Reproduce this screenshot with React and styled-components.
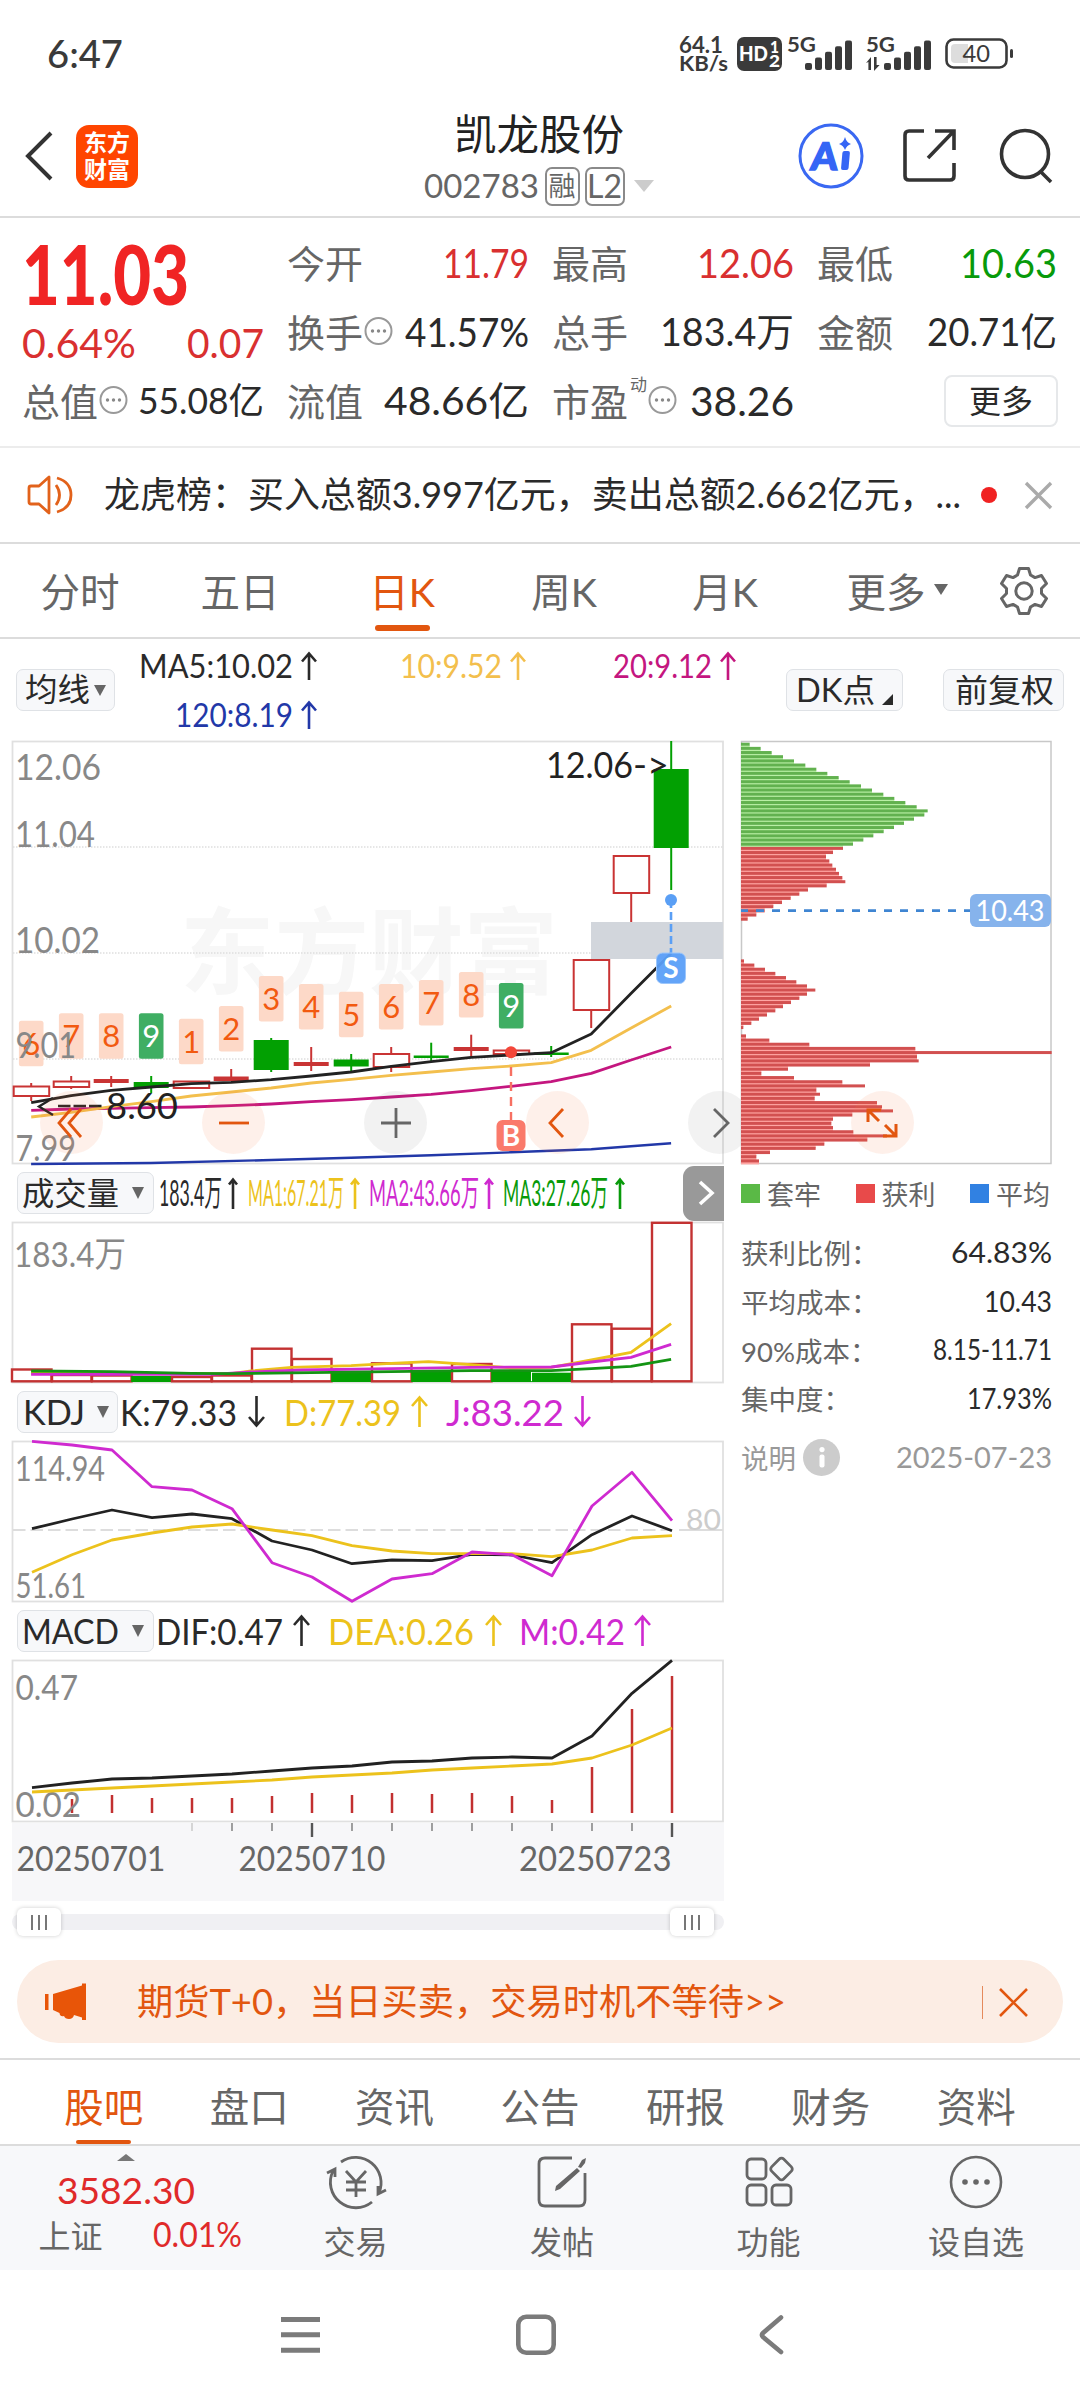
import React, { useLayoutEffect, useRef, useState } from "react";
import styled, { createGlobalStyle } from "styled-components";

const FONT = `Lato, "Noto Sans CJK SC", "Liberation Sans", sans-serif`;

const GlobalStyle = createGlobalStyle`
  * { box-sizing: border-box; }
  body { margin: 0; background: #fff; }
  svg { display: block; flex: none; overflow: visible; }
  svg text { font-family: ${FONT}; }
`;

const C = {
  red: "#d93030",
  green: "#089a0a",
  dark: "#2a2a2a",
  grey: "#666",
  orange: "#e2560f",
  line: "#dcdcdc",
  yellow: "#ecc21c",
  amber: "#f3bf4d",
  violet: "#cf2ad0",
  magenta: "#c4167f",
  navy: "#2238a8",
};

/* ---------- text that keeps a fixed width ---------- */

const FitBox = styled.span`
  display: inline-block;
  flex: none;
  width: ${(p) => p.$w}px;
  margin-left: ${(p) => p.$ml || 0}px;
  font-size: ${(p) => p.$size || 38}px;
  font-weight: ${(p) => p.$weight || 400};
  line-height: 1.2;
  color: ${(p) => p.$color || "inherit"};
  white-space: nowrap;
`;
const FitInner = styled.span`
  display: inline-block;
  margin-left: -1px;
  transform-origin: 0 50%;
`;

function Fit({ w, size, weight, color, ml, children }) {
  const ref = useRef(null);
  const [scale, setScale] = useState(1);
  useLayoutEffect(() => {
    const natural = ref.current.getBoundingClientRect().width / scale;
    if (natural) setScale((w + 2) / natural);
  }, [w, children]);
  return (
    <FitBox $w={w} $size={size} $weight={weight} $color={color} $ml={ml}>
      <FitInner ref={ref} style={{ transform: `scaleX(${scale})` }}>
        {children}
      </FitInner>
    </FitBox>
  );
}

const T = ({ x, r, y, size = 37, fill = "#888", children, ...rest }) => (
  <text x={x - 1} y={y} fontSize={size} fill={fill} textLength={r - x + 2} lengthAdjust="spacingAndGlyphs" {...rest}>
    {children}
  </text>
);

/* ---------- page ---------- */

const Page = styled.div`
  width: 1080px;
  height: 2400px;
  display: flex;
  flex-direction: column;
  overflow: hidden;
  background: #fff;
  font-family: ${FONT};
  color: ${C.dark};
`;

const StatusBar = styled.div`
  height: 108px;
  padding: 0 67px 0 48px;
  display: flex;
  align-items: center;
`;
const StatusIcons = styled.div`
  margin-left: auto;
  display: flex;
  align-items: center;
`;
const Speed = styled.div`
  display: flex;
  flex-direction: column;
  gap: 0;
  width: 50px;
  margin-right: 7px;
  color: #3a3a3a;
  & > span { line-height: 19px; }
`;

const Header = styled.header`
  height: 110px;
  padding: 0 27px 0 25px;
  display: grid;
  grid-template-columns: 1fr 230px 1fr;
  grid-template-rows: 108px;
  align-items: center;
  border-bottom: 2px solid ${C.line};
`;
const HeaderSide = styled.div`
  display: flex;
  align-items: center;
  justify-content: ${(p) => (p.$end ? "flex-end" : "flex-start")};
  gap: ${(p) => p.$gap}px;
  padding-bottom: 12px;
`;
const Logo = styled.div`
  width: 62px;
  height: 63px;
  border-radius: 13px;
  background: #ff4500;
  color: #fff;
  font-size: 23px;
  font-weight: 700;
  line-height: 27px;
  display: grid;
  place-content: center;
  text-align: center;
`;
const TitleBlock = styled.div`
  display: flex;
  flex-direction: column;
  align-items: center;
  padding-bottom: 3px;
`;
const Title = styled.div`
  font-size: 42.5px;
  line-height: 51px;
  color: #222;
`;
const SubTitle = styled.div`
  display: flex;
  align-items: center;
  height: 54px;
  color: ${C.grey};
`;
const Tag = styled.span`
  height: 39px;
  width: ${(p) => p.$w}px;
  margin-left: ${(p) => p.$ml}px;
  border: 2px solid #8a8a8a;
  border-radius: 7px;
  display: grid;
  place-content: center;
  font-size: ${(p) => p.$size}px;
  line-height: 34px;
`;
const Tri = styled.i`
  flex: none;
  width: 0;
  height: 0;
  margin-left: ${(p) => p.$ml || 0}px;
  border: ${(p) => p.$s}px solid transparent;
  border-bottom-width: 0;
  border-top: ${(p) => p.$h}px solid ${(p) => p.$color || C.grey};
`;

/* ---------- quote ---------- */

const Quote = styled.section`
  height: 230px;
  padding: 10px 24px 0 23px;
  display: grid;
  grid-template-columns: 240px 240px 240px 238px;
  grid-template-rows: 69px 69px 69px;
  column-gap: 25px;
  border-bottom: 2px solid #ececec;
`;
const PriceCell = styled.div`
  grid-row: span 2;
  display: flex;
  flex-direction: column;
`;
const PriceRow = styled.div`
  height: ${(p) => p.$h}px;
  display: flex;
  align-items: center;
  justify-content: space-between;
`;
const Cell = styled.div`
  display: flex;
  align-items: center;
  justify-content: space-between;
`;
const CellLabel = styled.span`
  display: flex;
  align-items: center;
  font-size: 38px;
  line-height: 44px;
  margin-left: -1px;
  color: ${C.grey};
`;
const Sup = styled.sup`
  align-self: flex-start;
  font-size: 17px;
  line-height: 17px;
  margin: -3px 0 0 2px;
`;
const MoreButton = styled.button`
  width: 114px;
  height: 52px;
  margin: 0 -2px 0 auto;
  padding: 0;
  background: #fff;
  border: 2px solid #e6e8ea;
  border-radius: 8px;
  font: 32px/44px ${FONT};
  color: ${C.dark};
`;

/* ---------- notice ---------- */

const Notice = styled.div`
  height: 96px;
  display: flex;
  align-items: center;
  padding: 0 28px 0 27px;
  border-bottom: 2px solid ${C.line};
`;
const Dot = styled.i`
  flex: none;
  width: 16px;
  height: 16px;
  margin: 0 28px 0 21px;
  border-radius: 50%;
  background: #f02222;
`;

/* ---------- tabs ---------- */

const PeriodTabs = styled.nav`
  height: 95px;
  display: grid;
  grid-template-columns: 160px 160px 164px 160px 162px 182px 71px;
  border-bottom: 2px solid ${C.line};
`;
const Tab = styled.div`
  position: relative;
  display: flex;
  align-items: center;
  justify-content: center;
  padding-bottom: ${(p) => p.$pb || 0}px;
  font-size: ${(p) => p.$size || 39.5}px;
  color: ${(p) => (p.$on ? C.orange : C.grey)};
  ${(p) => p.$on && `
    &::after {
      content: "";
      position: absolute;
      bottom: ${p.$bottom}px;
      width: 55px;
      height: ${p.$bar}px;
      border-radius: 3px;
      background: #e2560f;
    }
  `}
`;

const MaBar = styled.div`
  height: 102px;
  padding: 0 16px;
  display: flex;
  align-items: center;
`;
const Chip = styled.button`
  flex: none;
  width: ${(p) => p.$w}px;
  height: 42px;
  padding: 0 ${(p) => p.$pr || 0}px 0 0;
  margin-left: ${(p) => p.$ml || 0}px;
  display: flex;
  align-items: center;
  justify-content: center;
  background: #f7f8fa;
  border: 1.5px solid #dfe2e6;
  border-radius: 7px;
  font-family: ${FONT};
  color: ${C.dark};
`;
const MaGrid = styled.div`
  width: 646px;
  margin-left: 25px;
  height: 98px;
  display: flex;
  flex-wrap: wrap;
`;
const MaItem = styled.div`
  width: ${(p) => p.$w}px;
  height: 49px;
  padding-left: ${(p) => p.$pl || 0}px;
  padding-top: 1px;
  display: flex;
  align-items: center;
  color: ${(p) => p.$color};
`;
const Corner = styled.i`
  align-self: flex-end;
  margin: 0 0 5px 8px;
  border-left: 11px solid transparent;
  border-bottom: 11px solid ${C.dark};
`;

/* ---------- charts ---------- */

const ChartArea = styled.section`
  height: 1199px;
  display: grid;
  grid-template-columns: 712px 310px;
  column-gap: 17px;
  padding-left: 12px;
`;
const ChartColumn = styled.div`
  position: relative;
  display: flex;
  flex-direction: column;
`;
const SideColumn = styled.div`
  position: relative;
  display: flex;
  flex-direction: column;
`;
const IndicatorBar = styled.div`
  height: ${(p) => p.$h}px;
  display: flex;
  align-items: center;
  padding-left: 5px;
`;
const Reading = styled.div`
  display: flex;
  align-items: center;
  margin-left: ${(p) => p.$ml}px;
  color: ${(p) => p.$color};
`;
const NextButton = styled.button`
  width: 41px;
  height: 55px;
  margin-left: auto;
  padding: 0 0 0 7px;
  display: flex;
  align-items: center;
  justify-content: center;
  border: 0;
  border-radius: 11px 0 0 11px;
  background: #999;
`;
const FloatButton = styled.button`
  position: absolute;
  left: ${(p) => p.$x}px;
  top: 350px;
  width: 63px;
  height: 63px;
  padding: 0;
  display: grid;
  place-content: center;
  border: 0;
  border-radius: 50%;
  background: ${(p) => (p.$dim ? "rgba(90,90,90,.08)" : "rgba(250,120,60,.11)")};
`;
const Axis = styled.div`
  height: 78px;
  margin-top: 1px;
  background: #f7f7f9;
`;
const Slider = styled.div`
  height: 16px;
  margin-top: 13px;
  padding: 0 10px 0 5px;
  display: flex;
  align-items: center;
  justify-content: space-between;
  border-radius: 8px;
  background: #f0f0f3;
`;
const Handle = styled.i`
  width: 44px;
  height: 28px;
  display: flex;
  align-items: center;
  justify-content: center;
  gap: 5px;
  border-radius: 6px;
  background: #fff;
  box-shadow: 0 0 4px rgba(0, 0, 0, 0.2);
  & > b { width: 2px; height: 15px; background: #777; }
`;
const Legend = styled.div`
  height: 59px;
  display: flex;
  align-items: center;
  justify-content: space-between;
  padding-right: 1px;
`;
const LegendItem = styled.span`
  display: flex;
  align-items: center;
  gap: 7px;
  font-size: 27px;
  color: ${C.grey};
  &::before {
    content: "";
    width: 19px;
    height: 19px;
    background: ${(p) => p.$color};
  }
`;
const StatList = styled.div`
  padding-top: 5px;
`;
const Stat = styled.div`
  height: 48.7px;
  display: flex;
  align-items: center;
  justify-content: space-between;
  font-size: 27.5px;
  color: ${C.grey};
`;
const StatNote = styled(Stat)`
  margin-top: 10px;
  color: #999;
`;
const NoteLabel = styled.span`
  display: flex;
  align-items: center;
  gap: 7px;
`;
const Info = styled.i`
  width: 37px;
  height: 37px;
  border-radius: 50%;
  background: #ccc;
  display: grid;
  place-content: center;
`;

/* ---------- bottom ---------- */

const Banner = styled.div`
  width: 1046px;
  height: 83px;
  flex: none;
  margin: 20px 0 0 17px;
  padding: 1px 35px 0 28px;
  display: flex;
  align-items: center;
  border-radius: 42px;
  background: #fcede4;
  color: ${C.orange};
`;
const Divider = styled.i`
  width: 1.5px;
  height: 33px;
  margin: 0 16px 0 auto;
  background: #e58a5c;
`;
const InfoTabs = styled.nav`
  height: 88px;
  flex: none;
  margin-top: 15px;
  padding: 4px 31px 0;
  display: grid;
  grid-template-columns: repeat(7, 1fr);
  border-top: 2px solid ${C.line};
  border-bottom: 2px solid ${C.line};
`;
const Dock = styled.div`
  height: 124px;
  flex: none;
  display: grid;
  grid-template-columns: 252px 207px 206px 207px 208px;
  background: #f7f8fa;
`;
const IndexBox = styled.div`
  display: flex;
  flex-direction: column;
  align-items: center;
  padding-top: 8px;
`;
const UpTri = styled.i`
  border: 9.5px solid transparent;
  border-top: 0;
  border-bottom: 7px solid #777;
`;
const IndexRow = styled.div`
  height: 42px;
  width: 202px;
  margin-left: 27px;
  display: flex;
  align-items: center;
  justify-content: space-between;
  font-size: 32px;
  color: ${C.grey};
`;
const IndexValue = styled.div`
  margin-top: 7px;
  height: 45px;
  display: flex;
  align-items: center;
`;
const DockItem = styled.div`
  display: flex;
  flex-direction: column;
  align-items: center;
  padding-top: 8px;
  font-size: 32px;
  line-height: 40px;
  color: ${C.grey};
  & > svg { margin-bottom: 13px; }
`;
const SystemNav = styled.div`
  flex: 1;
  display: flex;
  align-items: flex-start;
  padding: 43px 0 0 281px;
`;
const Gap = styled.i`
  flex: none;
  width: ${(p) => p.$w}px;
`;

/* ---------- icons ---------- */

const ArrowSvg = styled.svg`
  margin-left: ${(p) => p.$ml}px;
`;
const Arrow = ({ down, w = 16, h = 28, ml = 9 }) => (
  <ArrowSvg $ml={ml} width={w} height={h} viewBox={`0 0 ${w} ${h}`} fill="none" stroke="currentColor" strokeWidth="2.6">
    <g transform={down ? `rotate(180 ${w / 2} ${h / 2})` : undefined}>
      <path d={`M${w / 2} ${h}V1.5M1 ${w * 0.5 + 1.5}L${w / 2} 1.5L${w - 1} ${w * 0.5 + 1.5}`} />
    </g>
  </ArrowSvg>
);

const More = () => (
  <svg width="29" height="29" viewBox="0 0 29 29" fill="none" stroke="#999" strokeWidth="2">
    <circle cx="15.5" cy="14" r="13" />
    <g fill="#888" stroke="none">
      <circle cx="9.5" cy="14" r="1.7" />
      <circle cx="15.5" cy="14" r="1.7" />
      <circle cx="21.5" cy="14" r="1.7" />
    </g>
  </svg>
);

const Signal = ({ data }) => (
  <svg width="66" height="36" viewBox="0 0 66 36" fill="#3a3a3a">
    <T x={1} r={28} y={16} size={21} fill="#3a3a3a" fontWeight="700">5G</T>
    {[0, 1, 2, 3, 4].map((i) => (
      <rect key={i} x={18 + i * 10} y={27 - i * 5.6} width="7" height={7 + i * 5.6} rx="2" />
    ))}
    {data && <path d="M0 27l5-6v13h-2.600v-8zM8 21h2.600v8h3l-5.600 6z" />}
  </svg>
);

const Cross = ({ s, color, w = 2.6 }) => (
  <svg width={s} height={s} viewBox={`0 0 ${s} ${s}`} stroke={color} strokeWidth={w}>
    <path d={`M1 1L${s - 1} ${s - 1}M${s - 1} 1L1 ${s - 1}`} />
  </svg>
);

const Gear = () => (
  <svg width="50" height="50" viewBox="0 0 50 50" fill="none" stroke="#666" strokeWidth="3" strokeLinejoin="round">
    <path d="M20.500 2.500h9l2 6.500 4.500 2.600 6.500-2.100 5 8-5 5v5l5 5-5 8-6.500-2.100-4.500 2.600-2 6.500h-9l-2-6.500-4.500-2.600-6.500 2.100-5-8 5-5v-5l-5-5 5-8 6.500 2.100 4.500-2.600z" />
    <circle cx="25" cy="25" r="8.200" />
  </svg>
);

/* ---------- chart data ---------- */

const col = (i) => 31.2 + 40 * i;
const poly = (ys, base, dx = 0) => ys.map((y, i) => `${col(i) + dx},${(base + y / 3).toFixed(1)}`).join(" ");
const free = (pts, base) => pts.map(([x, y]) => `${(x / 2.119).toFixed(1)},${(base + y / 3).toFixed(1)}`).join(" ");

// kind, body top, body bottom, wick top, wick bottom
const candles = [
  ["h", 1086.5, 1096, 1083, 1101],
  ["h", 1081.5, 1087, 1076, 1089],
  ["r", 1079, 1083, 1076, 1087],
  ["g", 1082, 1088, 1076, 1093],
  ["h", 1081.5, 1088, 1081, 1088],
  ["r", 1076.5, 1081, 1069, 1081],
  ["g", 1040, 1070, 1038, 1072],
  ["r", 1062, 1066, 1047, 1071],
  ["g", 1059.5, 1066.5, 1054, 1071],
  ["h", 1054, 1067, 1047, 1072],
  ["g", 1055.5, 1058, 1042.7, 1061],
  ["r", 1047, 1051, 1034.7, 1056.7],
  ["h", 1050.5, 1054, 1047, 1055],
  ["g", 1052.5, 1055, 1046, 1057],
  ["h", 960, 1010, 960, 1028],
  ["h", 856, 893, 856, 922],
  ["g", 769, 848, 741, 890],
];
const badges = [
  [6, 1020.7], [7, 1013.3], [8, 1013.3], [9, 1013.3, 1], [1, 1018.7], [2, 1006], [3, 976],
  [4, 984], [5, 991.7], [6, 984], [7, 980], [8, 972], [9, 983, 1],
];
const ma5 = [458, 437, 421, 411, 401, 397, 389, 378, 366, 349, 335, 322, 315, 308, 252, 130, 10];
const ma10 = [501, 487, 470, 455, 438, 426, 414, 399, 388, 376, 366, 356, 348, 338, 301, 234, 168];
const ma20 = [481, 477, 475, 473, 471, 467, 462, 455, 449, 441, 433, 422, 409, 395, 370, 330, 291];
const ma120 = [[66, 642], [320, 639], [575, 630], [744, 623], [914, 616], [1083, 607], [1253, 598], [1337, 589], [1422, 580]];

const volumes = [
  [1369.5, 0], [1375, 0], [1375.5, 0], [1376, 1], [1377, 0], [1375.5, 0], [1348.7, 0], [1359, 0], [1372, 1],
  [1363.3, 0], [1370, 1], [1364, 0], [1370, 1], [1372.7, 1], [1324.3, 0], [1328.7, 0], [1222.8, 0],
];
const vol1 = [[66, 640], [490, 641], [532, 633], [618, 622], [744, 617], [829, 610], [908, 605], [998, 614], [1083, 624], [1168, 622], [1253, 600], [1337, 577], [1422, 491]];
const vol2 = [[66, 643], [450, 643], [532, 636], [640, 630], [829, 626], [998, 622], [1168, 621], [1253, 606], [1337, 592], [1422, 553]];
const vol3 = [[66, 633], [236, 635], [405, 640], [490, 641], [659, 638], [829, 635], [998, 632], [1168, 632], [1253, 626], [1337, 619], [1422, 598]];

const kLine = [446, 417, 390, 413, 402, 416, 483, 510, 551, 540, 542, 523, 525, 548, 464, 408, 452];
const dLine = [577, 524, 480, 459, 441, 432, 450, 467, 497, 513, 521, 521, 521, 530, 510, 474, 467];
const jLine = [184, 195, 210, 320, 330, 386, 548, 591, 664, 597, 581, 516, 524, 587, 378, 277, 422];

const dif = [563, 549, 537, 534, 528, 522, 513, 504, 498, 486, 483, 474, 471, 474, 408, 280, 181];
const dea = [576, 570, 564, 558, 552, 546, 540, 531, 525, 519, 510, 504, 498, 492, 474, 435, 384];
const macd = [617, 597, 585, 594, 594, 594, 588, 579, 585, 579, 582, 579, 588, 600, 501, 327, 228];

const chips = [
  88, 121, 154, 188, 221, 255, 288, 321, 355, 388, 422, 455, 489, 522, 555, 589, 622, 612, 581, 551, 521, 490, 459, 429, 398,
  368, 338, 317, 327, 336, 347, 356, 366, 375, 319, 263, 237, 211, 185, 159, 133, 108, 82,
  0, 0, 0, 0, 0, 0, 0, 0, 0,
  71, 102, 134, 165, 197, 228, 260, 285, 260, 237, 212, 188, 165, 140, 116, 93, 69, 0,
  77, 147, 267, 585, 994, 590, 595, 449, 203, 123, 221, 366, 434, 288, 299, 283, 470, 485, 518, 396, 338, 333, 338, 399, 500, 441, 312, 286, 149, 108, 116, 133,
].map((v) => Math.max(0, (v - 62) / 3));

const Frame = ({ y, h }) => <rect x="12.5" y={y + 0.5} width="710.500" height={h - 1} fill="none" stroke="#e0e0e0" strokeWidth="1.800" />;
const Line = ({ points, stroke, w = 2.8 }) => <polyline points={points} fill="none" stroke={stroke} strokeWidth={w} strokeLinejoin="round" />;

function PriceChart() {
  return (
    <svg width="712" height="423" viewBox="12 741 712 423">
      <T x={181} r={557} y={987} size={94} fill="#f7f7f7" fontWeight="700">东方财富</T>
      <Frame y={741} h={423} />
      {[847, 953, 1059].map((y) => (
        <path key={y} d={`M13 ${y}H723`} stroke="#dedede" strokeWidth="1.500" strokeDasharray="1.500 1.500" />
      ))}
      <rect x="591" y="922" width="132" height="37" fill="#d2d6dc" />
      {badges.map(([n, y, g], i) => (
        <g key={i}>
          <rect x={col(i) - 12.3} y={y} width="24.600" height="45.500" rx="2.500" fill={g ? "#3fae63" : "#fdd9c8"} />
          <text x={col(i)} y={y + 34} textAnchor="middle" fontSize="31" fill={g ? "#fff" : "#f25a10"}>{n}</text>
        </g>
      ))}
      {candles.map(([k, t, b, wt, wb], i) => {
        const c = k === "g" ? "#02a002" : "#c93434";
        return (
          <g key={i} stroke={c} strokeWidth="2">
            {k === "h" ? (
              <>
                <path d={`M${col(i)} ${wt}V${t}M${col(i)} ${b}V${wb}`} />
                <rect x={col(i) - 17.5} y={t} width="35.500" height={b - t} fill="#fff" />
              </>
            ) : (
              <>
                <path d={`M${col(i)} ${wt}V${wb}`} />
                <rect x={col(i) - 17.5} y={t} width="35" height={b - t} fill={c} stroke="none" />
              </>
            )}
          </g>
        );
      })}
      <Line points={poly(ma20, 950)} stroke={C.magenta} />
      <Line points={poly(ma10, 950)} stroke={C.amber} />
      <Line points={poly(ma5, 950)} stroke="#222" />
      <Line points={free(ma120, 950)} stroke={C.navy} w={2.4} />
      <T x={16} r={100} y={780}>12.06</T>
      <T x={16} r={94} y={847}>11.04</T>
      <T x={16} r={99} y={953}>10.02</T>
      <T x={16.5} r={75} y={1058}>9.01</T>
      <T x={16.5} r={75} y={1160.5}>7.99</T>
      <T x={547} r={632} y={778} fill="#222">12.06</T>
      <T x={634} r={668} y={778} fill="#222">-&gt;</T>
      <path d="M53 1098L39 1106.500L53 1115" fill="none" stroke="#222" strokeWidth="2.400" />
      <path d="M58 1106H102" fill="none" stroke="#222" strokeWidth="2.400" strokeDasharray="12.500 3" />
      <T x={107} r={177} y={1119} fill="#222">8.60</T>
      <circle cx="671" cy="900" r="6" fill="#5a9ff5" />
      <path d="M671 900V953" stroke="#5a9ff5" strokeWidth="2.600" strokeDasharray="8 4" />
      <rect x="656.500" y="953" width="29" height="30.500" rx="6" fill="#5b9ff8" fillOpacity=".95" stroke="#9cc6fb" strokeWidth="1" />
      <text x="671" y="978" textAnchor="middle" fontSize="28" fontWeight="700" fill="#fff">S</text>
      <circle cx="511" cy="1052.300" r="6" fill="#f4473a" />
      <path d="M511 1067V1120" stroke="#f77062" strokeWidth="2.400" strokeDasharray="9 6" />
      <rect x="496.500" y="1120" width="29" height="31" rx="6" fill="#fa7a6b" />
      <text x="511" y="1146" textAnchor="middle" fontSize="28" fontWeight="700" fill="#fff">B</text>
    </svg>
  );
}

function VolumeChart() {
  return (
    <svg width="712" height="161" viewBox="12 1222 712 161">
      <Frame y={1222} h={161} />
      {volumes.map(([t, g], i) =>
        g ? (
          <rect key={i} x={11.2 + 40 * i} y={t} width="40" height={1382 - t} fill="#02a002" />
        ) : (
          <rect key={i} x={12 + 40 * i} y={t} width="39.500" height={1381.3 - t} fill="#fff" stroke="#c33232" strokeWidth="2.400" />
        )
      )}
      <path d="M531.500 1372V1381" stroke="#fff" strokeWidth="1" />
      <Line points={free(vol1, 1160)} stroke={C.yellow} />
      <Line points={free(vol2, 1160)} stroke={C.violet} />
      <Line points={free(vol3, 1160)} stroke="#149414" />
      <T x={15} r={125} y={1266.5} size={35}>183.4万</T>
    </svg>
  );
}

function KdjChart() {
  return (
    <svg width="712" height="161" viewBox="12 1441 712 161">
      <Frame y={1441} h={161} />
      <path d="M13 1530H671" stroke="#ddd" strokeWidth="1.800" strokeDasharray="12.500 5" />
      <path d="M679 1530H723" stroke="#ddd" strokeWidth="1.800" />
      <T x={687} r={720} y={1529.5} size={29} fill="#ccc">80</T>
      <T x={16} r={104} y={1480.5} size={35}>114.94</T>
      <T x={16.5} r={85} y={1597.5} size={35}>51.61</T>
      <Line points={poly(kLine, 1380, 0.8)} stroke="#222" />
      <Line points={poly(dLine, 1380, 0.8)} stroke={C.yellow} />
      <Line points={poly(jLine, 1380, 0.8)} stroke={C.violet} />
    </svg>
  );
}

function MacdChart() {
  return (
    <svg width="712" height="162" viewBox="12 1660 712 162">
      <Frame y={1660} h={162} />
      {macd.map((t, i) => (
        <path key={i} d={`M${col(i) + 0.8} ${1600 + t / 3}V1813`} stroke="#c23030" strokeWidth="2.500" opacity={i ? 1 : 0.35} />
      ))}
      <T x={16.5} r={77} y={1700} size={35}>0.47</T>
      <T x={16.5} r={80} y={1816.7} size={35}>0.02</T>
      <Line points={poly(dea, 1600, 0.8)} stroke={C.yellow} />
      <Line points={poly(dif, 1600, 0.8)} stroke="#222" />
    </svg>
  );
}

function AxisLabels() {
  return (
    <svg width="712" height="78" viewBox="12 1823 712 78">
      {[4, 5, 6, 7, 8, 9, 10, 11, 12, 13, 14, 15, 16].map((i) => {
        const major = i === 7 || i === 16;
        return <path key={i} d={`M${col(i) + 0.8} 1823V${major ? 1837 : 1831}`} stroke={major ? "#555" : i === 4 ? "#ccc" : "#888"} strokeWidth={major ? 2.4 : 1.6} />;
      })}
      <T x={17.5} r={164.5} y={1870.5} size={35} fill={C.grey}>20250701</T>
      <T x={239.5} r={384.5} y={1870.5} size={35} fill={C.grey}>20250710</T>
      <T x={520} r={670.5} y={1870.5} size={35} fill={C.grey}>20250723</T>
    </svg>
  );
}

function ChipChart() {
  return (
    <svg width="310" height="423" viewBox="741 741 310 423">
      <rect x="741.500" y="741.500" width="309.500" height="422" fill="none" stroke="#c8c8c8" strokeWidth="1.500" />
      {chips.map((w, k) => {
        const y = 744.2 + 4.167 * k;
        const under = Math.min(w, chips[k + 1] || 0);
        const green = k < 25;
        return (
          <g key={k}>
            {under > 0 && <rect x="741" y={y + 1} width={under} height="2.500" fill={green ? "#b9efa5" : "#ffa6a3"} />}
            {w > 0 && <rect x="741" y={y - 1.5} width={w} height={Math.min(3, 1165 - y)} fill={green ? "#62b14f" : "#d25050"} />}
          </g>
        );
      })}
      <path d="M741 910.700H970" stroke="#3f85d2" strokeWidth="2.800" strokeDasharray="8 8" strokeDashoffset="1" />
      <rect x="970" y="894" width="81" height="33" rx="6" fill="#86b3ec" />
      <T x={976.5} r={1043.5} y={921.3} size={29} fill="#fff">10.43</T>
    </svg>
  );
}

const floats = [
  [27.5, 0, "M15 1L3 15L15 29M25 1L13 15L25 29"],
  [190, 0, "M0 15H30"],
  [352, 1, "M0 15H30M15 0V30"],
  [513.5, 0, "M21 1L8 15L21 29"],
  [675.5, 1, "M10 1L24 15L10 29"],
];

const stats = [
  ["获利比例：", "64.83%", 99],
  ["平均成本：", "10.43", 66],
  ["90%成本：", "8.15-11.71", 117],
  ["集中度：", "17.93%", 83],
];

export default function App() {
  return (
    <Page>
      <GlobalStyle />
      <StatusBar>
        <Fit w={74} size={38} weight={500} color="#3a3a3a">6:47</Fit>
        <StatusIcons>
          <Speed>
            <Fit w={42} size={22} weight={700}>64.1</Fit>
            <Fit w={47} size={20} weight={700}>KB/s</Fit>
          </Speed>
          <svg width="45" height="34" viewBox="0 0 45 34">
            <rect width="45" height="34" rx="7" fill="#3a3a3a" />
            <T x={3} r={30} y={24} size={21} fill="#fff" fontWeight="900">HD</T>
            <T x={34} r={41} y={16} size={16} fill="#fff" fontWeight="900">1</T>
            <T x={33} r={42} y={30} size={16} fill="#fff" fontWeight="900">2</T>
          </svg>
          <Gap $w={5} />
          <Signal />
          <Gap $w={13} />
          <Signal data />
          <Gap $w={13} />
          <svg width="68" height="32" viewBox="0 0 68 32">
            <rect x="1.500" y="1.500" width="60" height="28" rx="7" fill="#fff" stroke="#3a3a3a" strokeWidth="2.600" />
            <path d="M10 6H23V25H10Q6 25 6 21V10Q6 6 10 6Z" fill="#ddd" />
            <rect x="65" y="11" width="3" height="9" rx="1.500" fill="#3a3a3a" />
            <T x={18.5} r={44} y={24} size={23} fill="#3a3a3a">40</T>
          </svg>
        </StatusIcons>
      </StatusBar>

      <Header>
        <HeaderSide $gap={23}>
          <svg width="28" height="50" viewBox="0 0 28 50" fill="none" stroke="#333" strokeWidth="4">
            <path d="M26 2L3 25L26 48" />
          </svg>
          <Logo>东方<br />财富</Logo>
        </HeaderSide>
        <TitleBlock>
          <Title>凯龙股份</Title>
          <SubTitle>
            <Fit w={113} size={33}>002783</Fit>
            <Tag $w={35} $ml={7} $size={27}>融</Tag>
            <Tag $w={40} $ml={5} $size={32}>L2</Tag>
            <Tri $s={10} $h={12} $ml={9} $color="#ccc" />
          </SubTitle>
        </TitleBlock>
        <HeaderSide $end>
          <svg width="66" height="66" viewBox="0 0 66 66">
            <circle cx="33" cy="33" r="31" fill="#fff" stroke="#3a68f2" strokeWidth="3" />
            <g transform="translate(4 0) skewX(-5)">
              <text x="12" y="47" fontSize="38" fontWeight="900" fill="#3565f5" stroke="#3565f5" strokeWidth="1.500">A</text>
              <rect x="43" y="28" width="7.500" height="19" rx="2" fill="#3565f5" />
            </g>
            <path d="M47 14Q48.500 19.500 53 21Q48.500 22.500 47 27Q45.500 22.500 41 21Q45.500 19.500 47 14Z" fill="#3565f5" />
          </svg>
          <Gap $w={39} />
          <svg width="54" height="56" viewBox="0 0 54 56" fill="none" stroke="#333" strokeWidth="3.600">
            <path d="M21 3H6Q2 3 2 7V48Q2 52 6 52H47Q51 52 51 48V35M32 3H51V22M50 4L25 30" />
          </svg>
          <Gap $w={42} />
          <svg width="54" height="56" viewBox="0 0 54 56" fill="none" stroke="#333" strokeWidth="3.600">
            <circle cx="26" cy="26" r="23.500" />
            <path d="M41 43L52 54" />
          </svg>
        </HeaderSide>
      </Header>

      <Quote>
        <PriceCell>
          <PriceRow $h={91}><Fit w={165} size={81} weight={900} color="#f02424">11.03</Fit></PriceRow>
          <PriceRow $h={48}>
            <Fit w={112} size={40} color={C.red}>0.64%</Fit>
            <Fit w={75} size={40} color={C.red}>0.07</Fit>
          </PriceRow>
        </PriceCell>
        <Cell><CellLabel>今开</CellLabel><Fit w={84} size={40} color={C.red}>11.79</Fit></Cell>
        <Cell><CellLabel>最高</CellLabel><Fit w={95} size={40} color={C.red}>12.06</Fit></Cell>
        <Cell><CellLabel>最低</CellLabel><Fit w={95} size={40} color={C.green}>10.63</Fit></Cell>
        <Cell><CellLabel>换手<More /></CellLabel><Fit w={122} size={40}>41.57%</Fit></Cell>
        <Cell><CellLabel>总手</CellLabel><Fit w={132} size={39}>183.4万</Fit></Cell>
        <Cell><CellLabel>金额</CellLabel><Fit w={128} size={39}>20.71亿</Fit></Cell>
        <Cell><CellLabel>总值<More /></CellLabel><Fit w={124} size={36}>55.08亿</Fit></Cell>
        <Cell><CellLabel>流值</CellLabel><Fit w={143} size={39}>48.66亿</Fit></Cell>
        <Cell><CellLabel>市盈<Sup>动</Sup><More /></CellLabel><Fit w={102} size={40}>38.26</Fit></Cell>
        <Cell><MoreButton>更多</MoreButton></Cell>
      </Quote>

      <Notice>
        <svg width="48" height="42" viewBox="0 0 48 42" fill="none" stroke="#e2621b" strokeWidth="2.800" strokeLinejoin="round">
          <path d="M22 3V39L12 30H4Q2 30 2 28V14Q2 12 4 12H12ZM29 11Q36 21 29 31M30 4Q44 8 44 21Q44 34 30 38" />
        </svg>
        <Fit w={855} size={36} ml={30}>龙虎榜：买入总额3.997亿元，卖出总额2.662亿元，...</Fit>
        <Dot />
        <Cross s={27} color="#aaa" w={3.4} />
      </Notice>

      <PeriodTabs>
        <Tab $pb={2}>分时</Tab>
        <Tab $pb={2}>五日</Tab>
        <Tab $pb={2} $on $bottom={6} $bar={6}>日K</Tab>
        <Tab $pb={2}>周K</Tab>
        <Tab $pb={2}>月K</Tab>
        <Tab $pb={2}>更多<Tri $s={7} $h={11} $ml={8} /></Tab>
        <Tab><Gear /></Tab>
      </PeriodTabs>

      <MaBar>
        <Chip $w={99}><Fit w={63} size={31.5}>均线</Fit><Tri $s={6.5} $h={11} $ml={5} /></Chip>
        <MaGrid>
          <MaItem $w={261} $color={C.dark}><Fit w={152} size={33}>MA5:10.02</Fit><Arrow /></MaItem>
          <MaItem $w={213} $color={C.amber}><Fit w={100} size={33}>10:9.52</Fit><Arrow /></MaItem>
          <MaItem $w={140} $color={C.magenta}><Fit w={97} size={33}>20:9.12</Fit><Arrow ml={9} /></MaItem>
          <MaItem $w={261} $pl={36} $color={C.navy}><Fit w={116} size={33}>120:8.19</Fit><Arrow /></MaItem>
        </MaGrid>
        <Chip $w={117}><Fit w={77} size={32}>DK点</Fit><Corner /></Chip>
        <Chip $w={121} $ml={40}><Fit w={97} size={32}>前复权</Fit></Chip>
      </MaBar>

      <ChartArea>
        <ChartColumn>
          <PriceChart />
          <IndicatorBar $h={58}>
            <Chip $w={137} $pr={4}><Fit w={95} size={32}>成交量</Fit><Tri $s={6.5} $h={12} $ml={14} /></Chip>
            <Reading $ml={6} $color={C.dark}><Fit w={61} size={36}>183.4万</Fit><Arrow w={10} h={31} ml={7} /></Reading>
            <Reading $ml={11} $color={C.yellow}><Fit w={94} size={36}>MA1:67.21万</Fit><Arrow w={10} h={31} ml={7} /></Reading>
            <Reading $ml={10} $color={C.violet}><Fit w={108} size={36}>MA2:43.66万</Fit><Arrow w={10} h={31} ml={6} /></Reading>
            <Reading $ml={10} $color={C.green}><Fit w={103} size={36}>MA3:27.26万</Fit><Arrow w={10} h={31} ml={8} /></Reading>
            <NextButton>
              <svg width="18" height="26" viewBox="0 0 18 26" fill="none" stroke="#fff" strokeWidth="3.600">
                <path d="M2 2L14 13L2 24" />
              </svg>
            </NextButton>
          </IndicatorBar>
          <VolumeChart />
          <IndicatorBar $h={58}>
            <Chip $w={101} $pr={3}><Fit w={60} size={34}>KDJ</Fit><Tri $s={6.5} $h={12} $ml={13} /></Chip>
            <Reading $ml={3} $color={C.dark}><Fit w={115} size={37}>K:79.33</Fit><Arrow down w={17} h={31} ml={12} /></Reading>
            <Reading $ml={20} $color={C.yellow}><Fit w={115} size={37}>D:77.39</Fit><Arrow w={17} h={31} ml={11} /></Reading>
            <Reading $ml={19} $color={C.violet}><Fit w={116} size={37}>J:83.22</Fit><Arrow down w={17} h={31} ml={11} /></Reading>
          </IndicatorBar>
          <KdjChart />
          <IndicatorBar $h={58}>
            <Chip $w={137} $pr={4}><Fit w={95} size={34}>MACD</Fit><Tri $s={6.5} $h={12} $ml={14} /></Chip>
            <Reading $ml={3} $color={C.dark}><Fit w={125} size={37}>DIF:0.47</Fit><Arrow w={17} h={31} ml={11} /></Reading>
            <Reading $ml={19} $color={C.yellow}><Fit w={144} size={37}>DEA:0.26</Fit><Arrow w={17} h={31} ml={12} /></Reading>
            <Reading $ml={18} $color={C.violet}><Fit w={104} size={37}>M:0.42</Fit><Arrow w={17} h={31} ml={10} /></Reading>
          </IndicatorBar>
          <MacdChart />
          <Axis><AxisLabels /></Axis>
          <Slider>
            <Handle><b /><b /><b /></Handle>
            <Handle><b /><b /><b /></Handle>
          </Slider>
          {floats.map(([x, dim, d]) => (
            <FloatButton key={x} $x={x} $dim={dim}>
              <svg width="30" height="30" viewBox="0 0 30 30" fill="none" stroke={dim ? "#666" : "#e2560f"} strokeWidth="2.800">
                <path d={d} />
              </svg>
            </FloatButton>
          ))}
        </ChartColumn>

        <SideColumn>
          <ChipChart />
          <FloatButton $x={109.5}>
            <svg width="32" height="32" viewBox="0 0 32 32" fill="none" stroke="#e2560f" strokeWidth="3">
              <path d="M2 15V3H15M3 4L13 14M30 17V29H17M29 28L19 18" />
            </svg>
          </FloatButton>
          <Legend>
            <LegendItem $color="#5ab946">套牢</LegendItem>
            <LegendItem $color="#e84a4a">获利</LegendItem>
            <LegendItem $color="#3181e2">平均</LegendItem>
          </Legend>
          <StatList>
            {stats.map(([label, value, w]) => (
              <Stat key={label}>{label}<Fit w={w} size={29} color={C.dark}>{value}</Fit></Stat>
            ))}
            <StatNote>
              <NoteLabel>
                说明
                <Info>
                  <svg width="8" height="21" viewBox="0 0 8 21" fill="#fff">
                    <circle cx="4" cy="2.600" r="2.600" />
                    <rect x="1.500" y="7.500" width="5" height="13" rx="2" />
                  </svg>
                </Info>
              </NoteLabel>
              <Fit w={154} size={29}>2025-07-23</Fit>
            </StatNote>
          </StatList>
        </SideColumn>
      </ChartArea>

      <Banner>
        <svg width="42" height="38" viewBox="0 0 42 38" fill="#e85508">
          <path d="M0 11H3.500V27H0ZM8 11L37 2.500V0.500H41V37H37V34.500L29 32Q28 36 24 36Q20 36 19 33Q15 34 14.500 30L8 27Z" />
        </svg>
        <Fit w={647} size={36} ml={51}>期货T+0，当日买卖，交易时机不等待&gt;&gt;</Fit>
        <Divider />
        <Cross s={29} color="#e2560f" />
      </Banner>

      <InfoTabs>
        {["股吧", "盘口", "资讯", "公告", "研报", "财务", "资料"].map((t, i) => (
          <Tab key={t} $size={39.5} $on={i === 0} $bottom={0} $bar={4}>{t}</Tab>
        ))}
      </InfoTabs>

      <Dock>
        <IndexBox>
          <UpTri />
          <IndexValue><Fit w={136} size={37} color="#e02a2a">3582.30</Fit></IndexValue>
          <IndexRow>上证<Fit w={87} size={34.5} color="#e02a2a">0.01%</Fit></IndexRow>
        </IndexBox>
        <DockItem>
          <svg width="60" height="55" viewBox="0 0 60 55" fill="none" stroke="#666" strokeWidth="2.800">
            <path d="M15 8A25.500 25.500 0 0 1 53 39M46 48A25.500 25.500 0 0 1 7 17M1 19L9 15V23M60 36L52 40V32" />
            <path d="M20 17L30 28L40 17M30 28V43M20 28H40M20 36H40" />
          </svg>
          交易
        </DockItem>
        <DockItem>
          <svg width="50" height="55" viewBox="0 0 50 55" fill="none" stroke="#666" strokeWidth="2.800">
            <path d="M35 4H8Q2 4 2 10V46Q2 52 8 52H42Q48 52 48 46V19" />
            <path d="M41 13L45 6L49 4L48 9L44 14ZM40 14L43 17L23 35L18 37L19 32Z" fill="#666" stroke="none" />
          </svg>
          发帖
        </DockItem>
        <DockItem>
          <svg width="50" height="55" viewBox="0 0 50 55" fill="none" stroke="#666" strokeWidth="2.800">
            <rect x="3" y="5" width="19" height="20" rx="4" />
            <rect x="3" y="31" width="19" height="20" rx="4" />
            <rect x="28" y="31" width="19" height="20" rx="4" />
            <rect x="29" y="6.500" width="17" height="17" rx="3" transform="rotate(45 37.500 15)" />
          </svg>
          功能
        </DockItem>
        <DockItem>
          <svg width="54" height="55" viewBox="0 0 54 55" fill="none" stroke="#666" strokeWidth="2.600">
            <circle cx="27" cy="28" r="25" />
            <g fill="#666" stroke="none">
              <circle cx="16" cy="28" r="2.800" />
              <circle cx="27" cy="28" r="2.800" />
              <circle cx="38" cy="28" r="2.800" />
            </g>
          </svg>
          设自选
        </DockItem>
      </Dock>

      <SystemNav>
        <svg width="39" height="44" viewBox="0 0 39 44" stroke="#7b7b7b" strokeWidth="5">
          <path d="M0 6.500H39M0 21.700H39M0 37.200H39" />
        </svg>
        <Gap $w={196} />
        <svg width="40" height="44" viewBox="0 0 40 44" fill="none" stroke="#7b7b7b" strokeWidth="4.600">
          <rect x="2.300" y="3.800" width="35.400" height="36" rx="8" />
        </svg>
        <Gap $w={203} />
        <svg width="26" height="44" viewBox="0 0 26 44" fill="none" stroke="#7b7b7b" strokeWidth="4.600" strokeLinecap="round" strokeLinejoin="round">
          <path d="M22 4.500L4 20Q2 22 4 24L22 39" />
        </svg>
      </SystemNav>
    </Page>
  );
}
